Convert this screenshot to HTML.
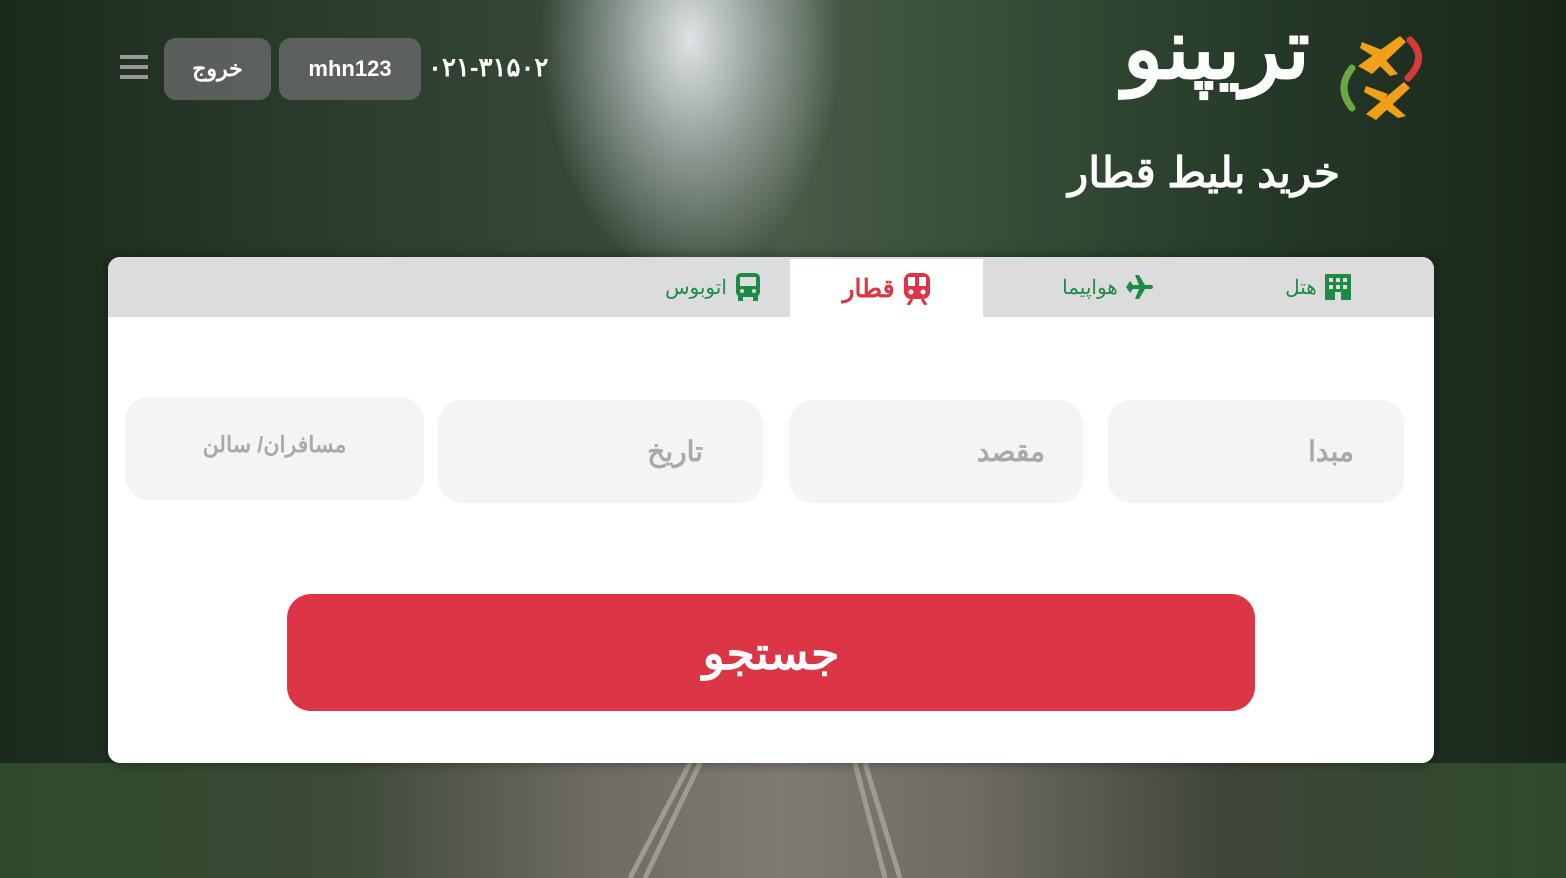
<!DOCTYPE html>
<html><head><meta charset="utf-8"><style>
*{margin:0;padding:0;box-sizing:border-box}
body{width:1566px;height:878px;overflow:hidden;position:relative;font-family:"Liberation Sans","Noto Sans CJK SC",sans-serif;
background:
radial-gradient(ellipse 150px 240px at 690px 40px,#dfe4e6 0%,rgba(200,210,210,.6) 45%,transparent 100%),
linear-gradient(90deg,#1a2a1c 0%,#2a3c2c 20%,#38493a 40%,#4a5a48 50%,#37503a 62%,#263a28 80%,#18261a 100%);}
.rail{position:absolute;left:0;top:763px;width:1566px;height:115px;background:linear-gradient(90deg,#2d4a2a 0%,#3d4a38 22%,#6f6b63 38%,#7f7a72 50%,#6f6b63 62%,#40463a 78%,#2d4a2a 100%)}
.t{position:absolute;color:#fff;white-space:nowrap}
.hb{position:absolute;background:rgba(110,110,110,.75);border-radius:12px;color:#fff;font-weight:bold;font-size:22px;display:flex;align-items:center;justify-content:center}
.card{position:absolute;left:108px;top:257px;width:1326px;height:506px;background:#fff;border-radius:12px;overflow:hidden;box-shadow:0 0 12px rgba(0,0,0,.4)}
.tabs{position:absolute;left:0;top:0;width:100%;height:60px;background:#dcdcdc}
.tab{position:absolute;top:0;height:60px;display:flex;align-items:center;justify-content:center;gap:8px;color:#1e8a45;font-size:20px}
.in{position:absolute;background:#f5f3f4;border-radius:24px;color:#a9a9a9;font-size:28px;font-weight:bold;display:flex;align-items:center;justify-content:flex-end;padding-right:58px}
.btn{position:absolute;left:179px;top:337px;width:968px;height:117px;background:#dc3545;border-radius:24px;color:#fff;font-size:46px;font-weight:bold;display:flex;align-items:center;justify-content:center}
</style></head><body>
<div class="rail"></div>
<svg style="position:absolute;left:600px;top:763px" width="360" height="115"><path d="M90 0 L30 115 M100 0 L45 115 M265 0 L300 115 M255 0 L285 115" stroke="#a09a90" stroke-width="5"/></svg>
<svg style="position:absolute;left:120px;top:55px" width="28" height="26"><rect y="0" width="28" height="4" fill="#999"/><rect y="10" width="28" height="4" fill="#999"/><rect y="20" width="28" height="4" fill="#999"/></svg>
<div class="hb" style="left:164px;top:38px;width:107px;height:62px">خروج</div>
<div class="hb" style="left:279px;top:38px;width:142px;height:62px">mhn123</div>
<div class="t" style="left:428px;top:52px;font-size:26px;font-weight:bold;letter-spacing:3px">۰۲۱-۳۱۵۰۲</div>
<div class="t" style="right:256px;top:0px;font-size:84px;font-weight:bold">تریپنو</div>
<svg style="position:absolute;left:1332px;top:28px" width="96" height="92" viewBox="0 0 96 92">
<path d="M20 40 Q4 60 20 80" stroke="#6aa843" stroke-width="7" fill="none" stroke-linecap="round"/>
<path d="M78 12 Q96 30 76 50" stroke="#d83a3a" stroke-width="7" fill="none" stroke-linecap="round"/>
<g fill="#f2a019"><path d="M26 38 L68 8 L74 14 L40 46Z"/><path d="M30 14 L50 22 L44 30 L28 20Z"/><path d="M52 30 L66 46 L58 48 L46 36Z"/>
<path d="M34 86 L72 54 L78 60 L44 92Z"/><path d="M34 58 L56 66 L50 74 L32 64Z"/><path d="M58 74 L74 88 L66 90 L52 80Z"/></g></svg>
<div class="t" style="right:226px;top:148px;font-size:42px;font-weight:bold">خرید بلیط قطار</div>
<div class="card">
<div class="tabs"></div>
<div class="tab" style="left:682px;width:193px;background:#fff;color:#dc3545;font-size:25px;top:2px;font-weight:bold">قطار <svg width="28" height="32" viewBox="0 0 28 32"><rect x="1" y="0" width="26" height="26" rx="7" fill="#dc3545"/><rect x="5" y="4" width="7" height="9" fill="#fff"/><rect x="16" y="4" width="7" height="9" fill="#fff"/><circle cx="8" cy="19" r="2.5" fill="#fff"/><circle cx="20" cy="19" r="2.5" fill="#fff"/><path d="M5 32 L9 26 M23 32 L19 26" stroke="#dc3545" stroke-width="3"/></svg></div>
<div class="tab" style="left:920px;width:160px">هواپیما <svg width="28" height="24" viewBox="0 0 28 24"><path d="M0 12 L4 6 L7 10 L13 10 L9 0 L13 0 L19 10 L26 10 Q28 12 26 14 L19 14 L13 24 L9 24 L13 14 L7 14 L4 18Z" fill="#1e8a45"/></svg></div>
<div class="tab" style="left:1150px;width:120px">هتل <svg width="26" height="26" viewBox="0 0 26 26"><rect width="26" height="26" fill="#1e8a45"/><g fill="#ddd"><rect x="4" y="4" width="4" height="4"/><rect x="11" y="4" width="4" height="4"/><rect x="18" y="4" width="4" height="4"/><rect x="4" y="11" width="4" height="4"/><rect x="11" y="11" width="4" height="4"/><rect x="18" y="11" width="4" height="4"/><rect x="10" y="18" width="6" height="8"/></g></svg></div>
<div class="tab" style="left:540px;width:130px">اتوبوس <svg width="26" height="28" viewBox="0 0 26 28"><rect x="1" y="0" width="24" height="24" rx="5" fill="#1e8a45"/><rect x="5" y="4" width="16" height="9" fill="#ddd"/><circle cx="7" cy="18" r="2" fill="#ddd"/><circle cx="19" cy="18" r="2" fill="#ddd"/><rect x="3" y="23" width="5" height="5" fill="#1e8a45"/><rect x="18" y="23" width="5" height="5" fill="#1e8a45"/></svg></div>
<div class="in" style="left:1000px;top:143px;width:296px;height:103px;padding-right:50px">مبدا</div>
<div class="in" style="left:681px;top:143px;width:294px;height:103px;padding-right:38px">مقصد</div>
<div class="in" style="left:330px;top:143px;width:325px;height:103px;padding-right:60px">تاریخ</div>
<div class="in" style="left:17px;top:140px;width:299px;height:103px;font-size:22px;justify-content:center;padding:0 0 8px 0">مسافران/ سالن</div>
<div class="btn">جستجو</div>
</div>
</body></html>
